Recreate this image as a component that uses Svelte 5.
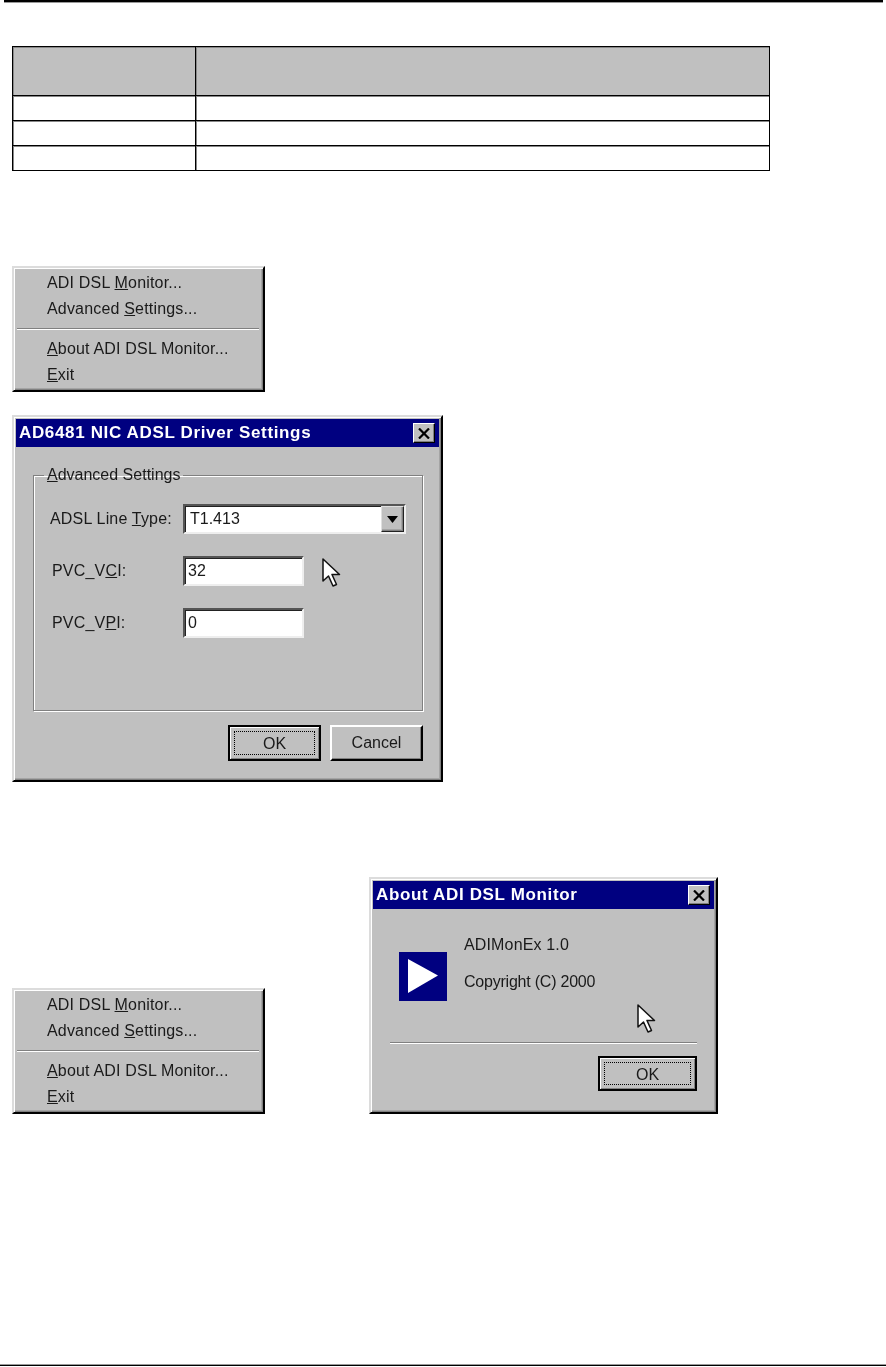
<script>
  const rows = [0, 1, 2];
</script>

{#snippet trayMenu()}
  <div class="menu win">
    <div class="item">ADI DSL <u>M</u>onitor...</div>
    <div class="item"><span>Advanced <u>S</u>ettings...</span></div>
    <div class="menuSep"></div>
    <div class="item"><u>A</u>bout ADI DSL Monitor...</div>
    <div class="item"><u>E</u>xit</div>
  </div>
{/snippet}

{#snippet closeBtn()}
  <div class="closeBtn">
    <svg width="12" height="11" viewBox="0 0 12 11">
      <path d="M1 0.5 L11 10.5 M11 0.5 L1 10.5" stroke="#000" stroke-width="2.2" fill="none" />
    </svg>
  </div>
{/snippet}

{#snippet arrow()}
  <svg class="arrowSvg" width="19" height="29" viewBox="0 0 19 29">
    <path d="M1 1 L1 23 L6.5 18 L11 28 L14.5 26.5 L10 16.5 L17.5 16.5 Z" fill="#fff" stroke="#111" stroke-width="1.5" stroke-linejoin="round" />
  </svg>
{/snippet}

<div class="page">
  <div class="topRule"></div>

  <table class="specs">
    <thead>
      <tr><th class="c1"></th><th></th></tr>
    </thead>
    <tbody>
      {#each rows as r}
        <tr><td></td><td></td></tr>
      {/each}
    </tbody>
  </table>

  <div class="firstMenu">{@render trayMenu()}</div>

  <div class="dialog settings win">
    <div class="titleBar">
      <span>AD6481 NIC ADSL Driver Settings</span>
      {@render closeBtn()}
    </div>
    <fieldset class="group">
      <legend><u>A</u>dvanced Settings</legend>
      <div class="formGrid">
        <label for="lineType">ADSL Line <u>T</u>ype:</label>
        <div class="combo" id="lineType">
          <span>T1.413</span>
          <div class="comboBtn">
            <svg width="11" height="7" viewBox="0 0 11 7"><path d="M0 0 H11 L5.5 7 Z" fill="#000" /></svg>
          </div>
        </div>
        <label class="pvc" for="vci">PVC_V<u>C</u>I:</label>
        <input id="vci" class="field" type="text" value="32" readonly />
        <label class="pvc" for="vpi">PVC_V<u>P</u>I:</label>
        <input id="vpi" class="field" type="text" value="0" readonly />
      </div>
    </fieldset>
    <div class="actions">
      <button class="btn default"><span class="focus">OK</span></button>
      <button class="btn">Cancel</button>
    </div>
    <div class="cursor cursor1">{@render arrow()}</div>
  </div>

  <div class="lower">
    {@render trayMenu()}
    <div class="dialog about win">
      <div class="titleBar">
        <span>About ADI DSL Monitor</span>
        {@render closeBtn()}
      </div>
      <div class="aboutBody">
        <div class="appIcon">
          <svg width="48" height="49" viewBox="0 0 48 49">
            <rect width="48" height="49" fill="#000080" />
            <path d="M9 7 L39 23.5 L9 41 Z" fill="#fff" />
          </svg>
        </div>
        <div class="aboutText">
          <div class="version">ADIMonEx 1.0</div>
          <div class="copyright">Copyright (C) 2000</div>
        </div>
      </div>
      <div class="aboutSep"></div>
      <div class="aboutActions">
        <button class="btn default wide"><span class="focus">OK</span></button>
      </div>
      <div class="cursor cursor2">{@render arrow()}</div>
    </div>
  </div>

  <div class="bottomRule"></div>
</div>

<style>
  :global(body) {
    margin: 0;
    background: #fff;
  }

  .page {
    width: 886px;
    height: 1367px;
    display: flex;
    flex-direction: column;
    font-family: "Liberation Sans", Arial, sans-serif;
    font-size: 16px;
    color: #1a1a1a;
    overflow: hidden;
  }

  .topRule {
    height: 2px;
    margin: 0 3px 0 4px;
    background: #000;
    border-bottom: 1px solid #999;
    flex: none;
  }

  .bottomRule {
    height: 1px;
    margin-top: auto;
    margin-bottom: 1px;
    background: #000;
    border-top: 1px solid #999;
    flex: none;
  }

  .specs {
    flex: none;
    margin: 43px 0 0 12px;
    width: 758px;
    table-layout: fixed;
    border-collapse: collapse;
  }

  .specs th,
  .specs td {
    border: 1px solid #000;
    padding: 0;
    box-shadow: inset 1px 1px #888;
  }

  .specs th {
    height: 48px;
    background: #c0c0c0;
  }

  .specs th.c1 {
    width: 182px;
  }

  .specs td {
    height: 24px;
  }

  .win {
    box-sizing: border-box;
    background: #c0c0c0;
    border: 2px solid;
    border-color: #dcdcdc #000 #000 #dcdcdc;
    box-shadow: inset 1px 1px #fff, inset -1px -1px #808080, inset -2px -2px #a4a4a4;
    filter: blur(0.35px);
  }

  .firstMenu {
    flex: none;
    margin: 95px 0 0 12px;
  }

  .menu {
    width: 253px;
    height: 126px;
    padding: 2px 3px 1px 2px;
    flex: none;
  }

  .item {
    height: 26px;
    line-height: 26px;
    padding-left: 31px;
    letter-spacing: 0.18px;
    white-space: nowrap;
  }

  .menuSep {
    height: 2px;
    margin: 6px 1px 6px 1px;
    background: #808080;
    border-bottom: 1px solid #fff;
    box-sizing: border-box;
  }

  .dialog {
    position: relative;
    flex: none;
    padding: 2px;
    display: flex;
    flex-direction: column;
  }

  .settings {
    width: 431px;
    height: 367px;
    margin: 23px 0 0 12px;
  }

  .titleBar {
    height: 28px;
    flex: none;
    background: #000080;
    color: #fff;
    font-size: 17px;
    font-weight: bold;
    letter-spacing: 0.65px;
    padding: 0 4px 0 3px;
    display: flex;
    align-items: center;
    justify-content: space-between;
    white-space: nowrap;
  }

  .closeBtn {
    box-sizing: border-box;
    width: 22px;
    height: 20px;
    background: #c0c0c0;
    border: 1px solid;
    border-color: #fff #000 #000 #fff;
    box-shadow: inset -1px -1px #808080;
    display: flex;
    align-items: center;
    justify-content: center;
  }

  .group {
    box-sizing: border-box;
    width: 390px;
    height: 245px;
    margin: 19px 0 0 17px;
    padding: 0 0 0 16px;
    border: 1px solid #808080;
    box-shadow: 1px 1px #fff, inset 1px 1px #fff;
    min-width: 0;
  }

  .group legend {
    margin-left: -6px;
    padding: 0 3px;
    line-height: 18px;
  }

  .formGrid {
    margin-top: 20px;
    display: grid;
    grid-template-columns: 133px auto;
    row-gap: 22px;
    align-items: center;
    justify-items: start;
  }

  .formGrid label {
    letter-spacing: 0.18px;
  }

  .pvc {
    padding-left: 2px;
  }

  .combo,
  .field {
    box-sizing: border-box;
    height: 30px;
    background: #fff;
    border: 2px solid;
    border-color: #555 #eee #eee #555;
    box-shadow: inset 1px 1px #222;
  }

  .combo {
    width: 223px;
    display: flex;
    align-items: center;
    justify-content: space-between;
    padding-left: 5px;
  }

  .comboBtn {
    box-sizing: border-box;
    width: 23px;
    height: 26px;
    background: #c0c0c0;
    border: 1px solid;
    border-color: #dfdfdf #222 #222 #dfdfdf;
    box-shadow: inset -1px -1px #808080, inset -2px -2px #a4a4a4;
    display: flex;
    align-items: center;
    justify-content: center;
  }

  .field {
    width: 121px;
    padding: 0 0 0 3px;
    margin: 0;
    outline: none;
    font: inherit;
    color: inherit;
  }

  .actions {
    display: flex;
    justify-content: flex-end;
    gap: 9px;
    margin-top: 14px;
    padding-right: 16px;
  }

  .btn {
    box-sizing: border-box;
    width: 93px;
    height: 36px;
    padding: 0;
    margin: 0;
    background: #c0c0c0;
    font: inherit;
    color: inherit;
    border: 2px solid;
    border-color: #fff #000 #000 #fff;
    box-shadow: inset -1px -1px #808080;
    border-radius: 0;
  }

  .btn.default {
    border-color: #000;
    box-shadow: inset 1px 1px #fff, inset -1px -1px #808080;
    padding: 4px;
  }

  .btn.wide {
    width: 99px;
    height: 35px;
  }

  .focus {
    display: block;
    height: 100%;
    box-sizing: border-box;
    border: 1px dotted #000;
    line-height: 24px;
  }

  .lower {
    flex: none;
    display: flex;
    align-items: flex-end;
    gap: 104px;
    margin: 95px 0 0 12px;
  }

  .about {
    width: 349px;
    height: 237px;
  }

  .aboutBody {
    flex: none;
    height: 133px;
    box-sizing: border-box;
    padding: 27px 0 0 26px;
    display: flex;
    gap: 17px;
  }

  .appIcon {
    margin-top: 16px;
    height: 49px;
  }

  .aboutText {
    line-height: 18px;
    display: flex;
    flex-direction: column;
    gap: 19px;
  }

  .version {
    letter-spacing: 0.15px;
  }

  .copyright {
    letter-spacing: -0.22px;
  }

  .aboutSep {
    height: 2px;
    box-sizing: border-box;
    margin: 0 17px 0 17px;
    background: #808080;
    border-bottom: 1px solid #fff;
  }

  .aboutActions {
    display: flex;
    justify-content: flex-end;
    margin-top: 12px;
    padding-right: 17px;
  }

  .cursor {
    position: absolute;
    line-height: 0;
  }

  .cursor1 {
    left: 308px;
    top: 141px;
  }

  .cursor2 {
    left: 266px;
    top: 125px;
  }

  .arrowSvg {
    display: block;
  }
</style>
